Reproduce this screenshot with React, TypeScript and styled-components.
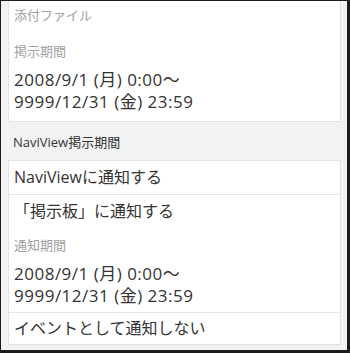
import styled, { createGlobalStyle } from "styled-components";

const GlobalStyle = createGlobalStyle`
  html, body {
    margin: 0;
    padding: 0;
    background: #ffffff;
  }
  body {
    font-family: "Open Sans", "Noto Sans CJK JP", sans-serif;
    color: #333333;
  }
`;

type FieldPad = "cut" | "normal" | "tight";

interface FieldProps {
  label: string;
  lines?: string[];
  pad?: FieldPad;
}

const Field = ({ label, lines, pad = "normal" }: FieldProps) => (
  <FieldBox $pad={pad}>
    <FieldLabel>{label}</FieldLabel>
    {lines && lines.length > 0 && (
      <FieldValue>
        {lines.map((line) => (
          <div key={line}>{line}</div>
        ))}
      </FieldValue>
    )}
  </FieldBox>
);

const period = ["2008/9/1 (月) 0:00～", "9999/12/31 (金) 23:59"];

const App = () => {
  return (
    <>
      <GlobalStyle />
      <Frame>
        {/* 上が見切れているパネル */}
        <Panel $cut>
          <Field label="添付ファイル" pad="cut" />
          <Field label="掲示期間" lines={period} />
        </Panel>

        <SectionHeader>NaviView掲示期間</SectionHeader>

        <Panel>
          <Row $divider>NaviViewに通知する</Row>
          <Block>
            <Row>「掲示板」に通知する</Row>
            <Field label="通知期間" lines={period} pad="tight" />
          </Block>
          <Row $last>イベントとして通知しない</Row>
        </Panel>
      </Frame>
    </>
  );
};

// 外枠 (黒いふち)
const Frame = styled.div`
  box-sizing: border-box;
  width: 350px;
  height: 353px;
  overflow: hidden;
  border-style: solid;
  border-color: #1c1c1c;
  border-width: 1px 3px 3px 1px;
  background: #f2f2f2;
  display: flex;
  flex-direction: column;
`;

// 白いカード
const Panel = styled.div<{ $cut?: boolean }>`
  margin: 0 6px 0 7px;
  background: #ffffff;
  border: 1px solid #e2e2e2;
  border-top: ${(p) => (p.$cut ? "none" : "1px solid #e2e2e2")};
  display: flex;
  flex-direction: column;
`;

const SectionHeader = styled.div`
  padding: 11px 12px 9px;
  font-size: 13px;
  line-height: 18px;
  color: #333333;
`;

const fieldPadding: Record<FieldPad, string> = {
  cut: "5px 5px 8px",
  normal: "10px 5px 8px",
  tight: "8px 5px 5px",
};

const FieldBox = styled.div<{ $pad: FieldPad }>`
  padding: ${(p) => fieldPadding[p.$pad]};
`;

const FieldLabel = styled.div`
  font-size: 13px;
  line-height: 18px;
  color: #a0a0a0;
`;

// 日付は幅広め
const FieldValue = styled.div`
  margin-top: 9px;
  font-size: 17px;
  line-height: 22px;
  letter-spacing: 0.5px;
  color: #333333;
`;

const Block = styled.div`
  border-bottom: 1px solid #e6e6e6;
`;

const Row = styled.div<{ $divider?: boolean; $last?: boolean }>`
  padding: ${(p) => (p.$last ? "5px 5px 5px" : "6px 5px")};
  font-size: 16px;
  line-height: 21px;
  color: #333333;
  border-bottom: ${(p) => (p.$divider ? "1px solid #e6e6e6" : "none")};
`;

export default App;
